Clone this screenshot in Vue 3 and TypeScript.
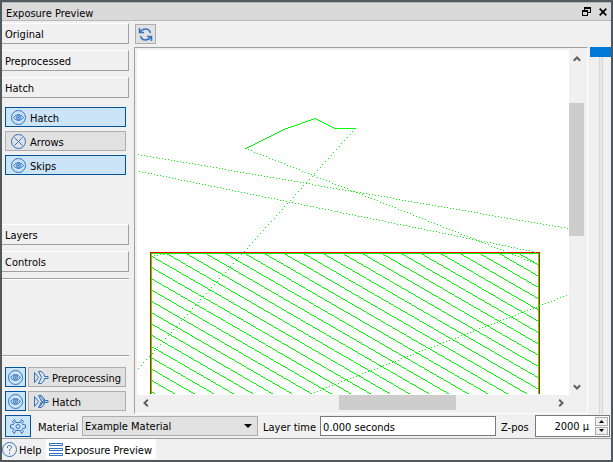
<script setup lang="ts">
import { ref } from 'vue'

interface Toggle {
  label: string
  on: boolean
}

type Point = [number, number]

const toggles = ref<Toggle[]>([
  { label: 'Hatch', on: true },
  { label: 'Arrows', on: false },
  { label: 'Skips', on: true },
])
const material = ref('Example Material')
const layerTime = ref('0.000 seconds')
const zPos = ref(2000)
const layer = ref(0)

const pixel = (x: number, y: number, w = 1): string => `M${x} ${y}h${w}v1h${-w}z`

// Walks a segment along its longer axis and marks every `step`-th pixel.
function trace([x1, y1]: Point, [x2, y2]: Point, step: number): string {
  const dx = x2 - x1
  const dy = y2 - y1
  const length = Math.max(Math.abs(dx), Math.abs(dy))
  let d = ''
  for (let i = 0; i <= length; i += step) {
    d += pixel(Math.round(x1 + (dx * i) / length), Math.round(y1 + (dy * i) / length))
  }
  return d
}

const outline: Point[] = [[108, 98], [149, 78], [178, 68], [197, 78], [218, 78]]
const outlinePath = outline.slice(1).map((p, i) => trace(outline[i], p, 1)).join('')

const skips: [Point, Point][] = [
  [[108, 98], [398, 213]],
  [[218, 78], [1, 318]],
  [[1, 104], [430, 178]],
  [[2, 121], [400, 202]],
  [[429, 245], [174, 343]],
  [[17, 205], [32, 203]],
]
const skipPath = skips.map(([a, b]) => trace(a, b, 3)).join('')

// Parallel hatch lines at 30 degrees, clipped to the part's interior.
function hatch(left: number, top: number, right: number, bottom: number): string {
  const slope = Math.tan(Math.PI / 6)
  let d = ''
  for (let k = -13; k < 20; k++) {
    const origin = 11.2 + 19.57 * k
    let start = left
    let row = Math.round(top + (left - origin) * slope)
    for (let x = left + 1; x <= right + 1; x++) {
      const y = Math.round(top + (x - origin) * slope)
      if (y !== row || x > right) {
        if (row >= top && row <= bottom) d += pixel(start, row, x - start)
        start = x
        row = y
      }
    }
  }
  return d
}
const hatchPath = hatch(15, 204, 400, 343)
</script>

<template>
  <main class="window">
    <header class="title">
      <h1>Exposure Preview</h1>
      <button class="plain" aria-label="Float">
        <svg width="9" height="9" shape-rendering="crispEdges"><path d="M2 0h7v6H6v3H0V3h2zM3 2v1h3v2h2V2zM1 5v3h4V5z" fill="#000" fill-rule="evenodd" /></svg>
      </button>
      <button class="plain" aria-label="Close">
        <svg width="8" height="8"><path d="M.7.7l6.6 6.6M7.3.7L.7 7.3" stroke="#000" stroke-width="1.7" /></svg>
      </button>
    </header>

    <div class="body">
      <aside class="side">
        <button class="section">Original</button>
        <button class="section">Preprocessed</button>
        <button class="section">Hatch</button>
        <div class="toggles">
          <button v-for="t in toggles" :key="t.label" class="btn" :class="{ on: t.on }" :aria-pressed="t.on" @click="t.on = !t.on">
            <svg class="icon" width="15" height="15" viewBox="0 0 15 15">
              <circle cx="7.5" cy="7.5" r="7" />
              <template v-if="t.on">
                <path d="M2.5 7.5Q7.5 1.5 12.5 7.5Q7.5 13.5 2.5 7.5Z" />
                <circle cx="7.5" cy="7.5" r="2" />
                <circle class="dot" cx="7.5" cy="7.5" r=".6" />
              </template>
              <path v-else d="M3.5 3.5l8 8M11.5 3.5l-8 8" />
            </svg>
            <span class="text">{{ t.label }}</span>
          </button>
        </div>
        <button class="section">Layers</button>
        <button class="section">Controls</button>
        <hr />
        <div class="spacer"></div>
        <hr />
        <div class="exports">
          <template v-for="name in ['Preprocessing', 'Hatch']" :key="name">
            <button class="btn eye on" :aria-label="'Show ' + name">
              <svg class="icon" width="15" height="15" viewBox="0 0 15 15">
                <circle cx="7.5" cy="7.5" r="7" />
                <path d="M2.5 7.5Q7.5 1.5 12.5 7.5Q7.5 13.5 2.5 7.5Z" />
                <circle cx="7.5" cy="7.5" r="2" />
                <circle class="dot" cx="7.5" cy="7.5" r=".6" />
              </svg>
            </button>
            <button class="btn export">
              <svg class="icon" width="15" height="13" viewBox="0 0 15 13">
                <path d="M.5 1.5v10l4-5zM4.5 .5h3l2.500 3 .5 2h3.500v2h-3.500l-.5 2-2.500 3h-3l3-6z" />
                <path v-if="name === 'Hatch'" d="M6 1l5 6M9 6l-3 5.500M10.500 4L7 10M7.500 5.500l3 3.500" />
              </svg>
              <span class="text">{{ name }}</span>
            </button>
          </template>
        </div>
      </aside>

      <section class="stage">
        <div class="tools">
          <button class="btn refresh" aria-label="Refresh">
            <svg class="icon bold" width="15" height="15" viewBox="0 0 15 15">
              <path d="M1.5 1v4.5h4.5M1.5 5.500Q4 2 7.500 2Q11.500 2 12.500 6M13.500 14V9.500H9M13.500 9.500Q11 13 7.500 13Q3.500 13 2.500 9" />
            </svg>
          </button>
        </div>
        <div class="views">
          <div class="viewport">
            <svg class="drawing" shape-rendering="crispEdges" role="img" aria-label="Layer drawing">
              <path :d="hatchPath" fill="#0f0" />
              <path d="M13.5 344V202.5H402.5V344" fill="none" stroke="#f00" />
              <path d="M14.5 344V203.5H401.5V344" fill="none" stroke="#0f0" />
              <path :d="skipPath" fill="#0f0" />
              <path :d="outlinePath" fill="#0f0" />
            </svg>
            <div class="bar vertical">
              <button class="plain" aria-label="Scroll up"><svg width="8" height="6"><path d="M.8 4.8L4 1.5l3.200 3.300" class="chevron" /></svg></button>
              <div class="track"><i class="before"></i><i class="thumb"></i><i class="after"></i></div>
              <button class="plain" aria-label="Scroll down"><svg width="8" height="6"><path d="M.8 1.2L4 4.5l3.200-3.300" class="chevron" /></svg></button>
            </div>
            <div class="bar horizontal">
              <button class="plain" aria-label="Scroll left"><svg width="6" height="8"><path d="M4.8 .8L1.5 4l3.300 3.200" class="chevron" /></svg></button>
              <div class="track"><i class="before"></i><i class="thumb"></i><i class="after"></i></div>
              <button class="plain" aria-label="Scroll right"><svg width="6" height="8"><path d="M1.2 .8L4.5 4 1.2 7.2" class="chevron" /></svg></button>
            </div>
          </div>
          <input v-model.number="layer" class="layers" type="range" min="0" max="100" aria-label="Layer" />
        </div>
      </section>
    </div>

    <div class="settings">
      <button class="btn gear on" aria-label="Settings">
        <svg class="icon" width="16" height="15" viewBox="0 0 16 15">
          <path d="M5.5 3.5L4.5 .5L2.5 2.500L4 4.500L3.500 5.500L.5 6v3l3 .5L4 10.500L2.500 12.500L4.500 14.500L5.500 11.500H10.500L11.500 14.500L13.500 12.500L12 10.500L12.500 9.500L15.500 9V6L12.500 5.500L12 4.500L13.500 2.500L11.500 .5L10.500 3.500Z" />
          <circle cx="8" cy="7.5" r="2" />
        </svg>
      </button>
      <label class="text material-label" for="material">Material</label>
      <div class="select">
        <select id="material" v-model="material"><option>Example Material</option></select>
        <svg width="8" height="4"><path d="M0 0h8L4 4z" /></svg>
      </div>
      <label class="text" for="time">Layer time</label>
      <input id="time" v-model="layerTime" class="field" type="text" />
      <label class="text z-label" for="zpos">Z-pos</label>
      <div class="spin">
        <input id="zpos" type="text" :value="zPos + ' µ'" />
        <div class="steps">
          <button aria-label="Increase" @click="zPos++"><svg width="5" height="3"><path d="M0 3h5L2.5 0z" /></svg></button>
          <button aria-label="Decrease" @click="zPos--"><svg width="5" height="3"><path d="M0 0h5L2.5 3z" /></svg></button>
        </div>
      </div>
    </div>

    <nav class="tabs">
      <button class="tab">
        <svg class="icon" width="15" height="15" viewBox="0 0 15 15">
          <circle cx="7.5" cy="7.5" r="7" />
          <path d="M5.5 6V4.500Q6 3.500 7.500 3.500T9.500 5Q9.500 6 8.500 6.700T7.500 9M7.500 10.500v1.500" />
        </svg>
        <span class="text">Help</span>
      </button>
      <button class="tab current">
        <svg class="icon" width="14" height="13" viewBox="0 0 14 13">
          <path d="M.5 .5h13v2H.5zM.5 5.5h13v2H.5zM.5 10.5h13v2H.5z" />
        </svg>
        <span class="text">Exposure Preview</span>
      </button>
    </nav>
  </main>
</template>

<style>
body {
  margin: 0;
}
</style>

<style scoped>
* {
  box-sizing: border-box;
}
.window {
  min-height: 100vh;
  display: flex;
  flex-direction: column;
  border: 2px solid #4f595e;
  background: #f0f0f0;
  color: #000;
  font: 11px/14px "DejaVu Sans Condensed", "DejaVu Sans", sans-serif;
}
button,
input,
select {
  margin: 0;
  padding: 0;
  border: 0;
  border-radius: 0;
  background: none;
  color: inherit;
  font: inherit;
}
svg {
  display: block;
  flex: none;
}
.text {
  padding-top: 3px;
}
.title {
  display: flex;
  align-items: center;
  gap: 8px;
  height: 19px;
  padding: 0 4px;
  border-top: 1px solid #b8b8b8;
  border-bottom: 1px solid #b8b8b8;
  background: #dadada;
}
h1 {
  flex: 1;
  margin: 0;
  padding-top: 4px;
  font: inherit;
}
.plain {
  display: grid;
  place-items: center;
}
.body {
  flex: 1;
  display: flex;
}
.side {
  width: 127px;
  display: flex;
  flex-direction: column;
  gap: 6px;
  padding-top: 2px;
}
.section {
  height: 21px;
  padding: 2px 0 0 3px;
  border-top: 1px solid #fff;
  border-right: 1px solid #a0a0a0;
  border-bottom: 1px solid #a0a0a0;
  text-align: left;
}
.toggles {
  display: grid;
  align-content: start;
  gap: 4px;
  height: 114px;
  padding: 3px;
}
.btn {
  display: flex;
  align-items: center;
  gap: 4px;
  height: 20px;
  padding: 0 5px;
  border: 1px solid #adadad;
  background: #e1e1e1;
  white-space: nowrap;
}
.btn.on {
  border-color: #005499;
  background: #cce4f7;
}
.icon {
  fill: none;
  stroke: #3273c0;
}
.icon.bold {
  stroke-width: 1.5;
}
.dot {
  fill: #3273c0;
}
hr {
  width: 100%;
  margin: 0;
  border: 0;
  border-top: 1px solid #a0a0a0;
  border-bottom: 1px solid #fff;
}
.spacer {
  flex: 1;
}
.exports {
  display: grid;
  grid-template-columns: 21px 1fr;
  gap: 4px 2px;
  padding: 4px 3px 3px;
}
.btn.eye {
  padding: 0 2px;
}
.btn.export {
  min-width: 0;
  gap: 3px;
  padding: 0 0 0 5px;
}
.stage {
  flex: 1;
  min-width: 0;
  display: flex;
  flex-direction: column;
  padding-left: 5px;
}
.tools {
  padding: 3px 1px;
}
.btn.refresh {
  width: 21px;
  padding: 0 2px;
}
.views {
  flex: 1;
  display: flex;
  gap: 2px;
}
.viewport {
  flex: 1;
  display: grid;
  grid-template: 1fr 15px / 1fr 15px;
  padding: 2px 3px 3px 2px;
  border: 1px solid;
  border-color: #a0a0a0 #fff #fff #a0a0a0;
}
.drawing {
  width: 100%;
  height: 100%;
  min-height: 344px;
  background: #fff;
}
.bar,
.track {
  display: flex;
}
.bar .plain {
  flex: 0 0 17px;
}
.track {
  flex: 1;
}
.vertical,
.vertical .track {
  flex-direction: column;
}
.thumb {
  background: #cdcdcd;
}
.vertical .before {
  flex: 36;
}
.vertical .thumb {
  flex: 132;
}
.vertical .after {
  flex: 142;
}
.horizontal .before {
  flex: 185;
}
.horizontal .thumb {
  flex: 117;
}
.horizontal .after {
  flex: 96;
}
.chevron {
  fill: none;
  stroke: #606060;
  stroke-width: 2;
}
.layers {
  width: 21px;
  height: auto;
  appearance: none;
  writing-mode: vertical-lr;
}
.layers::-webkit-slider-runnable-track {
  width: 4px;
  border: solid #d6d6d6;
  border-width: 0 1px;
  background: #e7eaea;
}
.layers::-webkit-slider-thumb {
  appearance: none;
  width: 21px;
  height: 10px;
  margin-left: -10px;
  background: #0078d7;
}
.settings {
  display: flex;
  align-items: center;
  height: 25px;
  padding: 0 1px 0 3px;
  border-bottom: 1px solid #a0a0a0;
}
.btn.gear {
  width: 26px;
  height: 22px;
  padding: 0 4px;
}
.material-label {
  width: 51px;
  padding-left: 7px;
}
.select {
  width: 176px;
  height: 20px;
  display: grid;
  align-items: center;
  margin-right: 5px;
  border: 1px solid #adadad;
  background: #e1e1e1;
}
.select > * {
  grid-area: 1 / 1;
}
.select svg {
  justify-self: end;
  margin-right: 5px;
  pointer-events: none;
}
select {
  height: 18px;
  padding: 2px 0 0 2px;
  appearance: none;
}
.field {
  flex: 1;
  min-width: 0;
  height: 20px;
  margin: 0 5px 0 4px;
  padding: 2px 2px 0;
  border: 1px solid #7a7a7a;
  background: #fff;
}
.z-label {
  width: 34px;
}
.spin {
  width: 75px;
  height: 22px;
  display: flex;
  border: 1px solid #7a7a7a;
  background: #fff;
}
.spin input {
  flex: 1;
  min-width: 0;
  padding: 2px 5px 0 0;
  text-align: right;
}
.steps {
  width: 15px;
  display: grid;
  gap: 1px;
  padding: 1px;
}
.steps button {
  display: grid;
  place-items: center;
  border: 1px solid #adadad;
  background: #f0f0f0;
}
.tabs {
  display: flex;
  height: 21px;
}
.tab {
  display: flex;
  align-items: center;
  gap: 2px;
  height: 20px;
  padding-right: 4px;
}
.tab.current {
  padding: 0 4px 0 3px;
  background: #fff;
}
</style>
